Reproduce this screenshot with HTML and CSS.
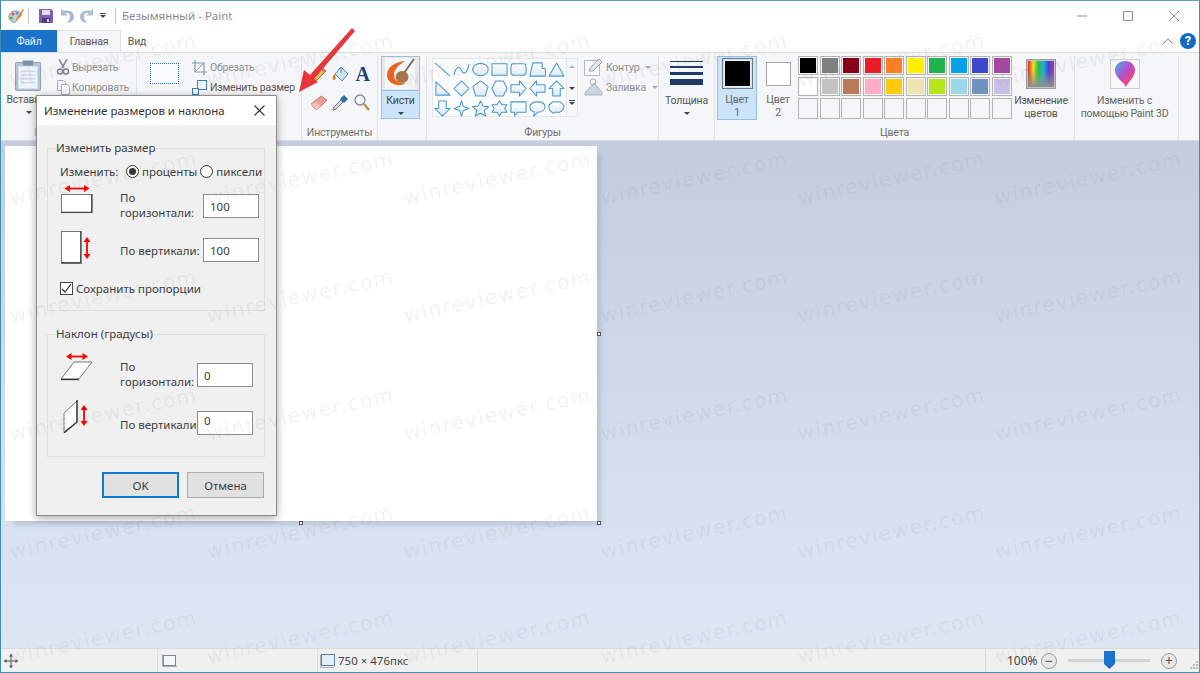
FILE: index.html
```html
<!DOCTYPE html>
<html lang="ru">
<head>
<meta charset="utf-8">
<title>Paint</title>
<link rel="stylesheet" href="styles.css">
</head>
<body>
<svg class="defs" width="0" height="0">
  <defs>
    <linearGradient id="shapeFill" x1="0" y1="0" x2="0" y2="1"><stop offset="0" stop-color="#fff"/><stop offset="1" stop-color="#dbeaf7"/></linearGradient>
    <linearGradient id="drop" x1="0" y1="0" x2="1" y2="1"><stop offset="0" stop-color="#3fb4f0"/><stop offset=".45" stop-color="#b04fd0"/><stop offset=".75" stop-color="#ef4a7a"/><stop offset="1" stop-color="#f7a72a"/></linearGradient>
  </defs>
</svg>
<div class="window">
  <header class="titlebar">
    <svg class="qa logo" width="18" height="18" viewBox="0 0 18 18"><path d="M2 11c-1-4 3-7 7-7 3 0 6 2 5 5-1 2-4 1-4 3s-1 4-4 3c-2-.5-3.500-2-4-4z" fill="#c9cfd8" stroke="#7d8fa8"/><circle cx="6" cy="7" r="1.600" fill="#e8503a"/><circle cx="10" cy="6.500" r="1.400" fill="#3ea0dd"/><circle cx="4.500" cy="11" r="1.500" fill="#57b04b"/><path d="M9 12l7-10 1 1-6 10z" fill="#e98a2b"/></svg>
    <span class="qa-sep first"></span>
    <svg class="qa save" width="14" height="14" viewBox="0 0 14 14"><path d="M0 0h12l2 2v12H0z" fill="#7d5fb0"/><path d="M3 1h8v5H3z" fill="#e4ddf0"/><path d="M3 9h8v5H3z" fill="#4c3c78"/><path d="M8 10h2v3H8z" fill="#d8d0ea"/></svg>
    <svg class="qa undo" width="14" height="15" viewBox="0 0 14 14"><path d="M1 0v7h7L5.500 4.800C8 4 10 5.500 10 8s-1 4-3 6c4 .5 7-2 7-6 0-5-6-7-10.500-5.500z" fill="#a9bdd2"/></svg>
    <svg class="qa redo" width="14" height="15" viewBox="0 0 14 14"><path d="M13 0v7H6l2.500-2.200C6 4 4 5.500 4 8s1 4 3 6c-4 .5-7-2-7-6 0-5 6-7 10.500-5.500z" fill="#b0bfd0"/></svg>
    <span class="qa-drop"><i class="bar"></i><i class="tri"></i></span>
    <span class="qa-sep second"></span>
    <span class="doc-title">Безымянный - Paint</span>
    <span class="win-btns">
      <svg class="win" width="46" height="12" viewBox="0 0 46 12"><path d="M18 6h10" stroke="#8a8a8a"/></svg>
      <svg class="win" width="46" height="12" viewBox="0 0 46 12"><path d="M18.500 1.500h9v9h-9z" fill="none" stroke="#8a8a8a"/></svg>
      <svg class="win" width="46" height="12" viewBox="0 0 46 12"><path d="M18 1l10 10M28 1L18 11" stroke="#8a8a8a"/></svg>
    </span>
  </header>

  <nav class="tabs">
    <span class="tab file">Файл</span>
    <span class="tab home">Главная</span>
    <span class="tab view">Вид</span>
    <span class="tabs-right">
      <svg width="10" height="6" viewBox="0 0 10 6"><path d="M.5 5.500L5 1l4.500 4.500" fill="none" stroke="#8f8f8f"/></svg>
      <span class="help">?</span>
    </span>
  </nav>

  <section class="ribbon">
    <div class="group g-clip">
      <div class="g-body clip-body">
        <div class="big paste">
          <svg width="27" height="33" viewBox="0 0 28 33"><rect x=".5" y="3" width="26" height="29" rx="1" fill="#b7c6d6" stroke="#8b9bb0"/><rect x="3.500" y="7" width="20" height="23" fill="#edf3f9"/><path d="M6 12h15M6 16h15M6 20h15M6 24h15" stroke="#b9cbe0"/><rect x="8" y="1" width="11" height="5" rx="1" fill="#7f8fa4"/></svg>
          <span class="lbl">Вставить</span><i class="tri"></i>
        </div>
        <div class="rows">
          <div class="row"><svg width="14" height="16" viewBox="0 0 14 16"><path d="M3 0l5 9M11 0L6 9" stroke="#8b8f96" stroke-width="1.600"/><circle cx="4" cy="12.500" r="2.500" fill="none" stroke="#7f8794" stroke-width="1.500"/><circle cx="10" cy="12.500" r="2.500" fill="none" stroke="#7f8794" stroke-width="1.500"/></svg><span>Вырезать</span></div>
          <div class="row"><svg width="14" height="15" viewBox="0 0 14 15"><path d="M1.500.5h6l2 2v8h-8z" fill="#eef1f5" stroke="#a7aeb8"/><path d="M5.500 4.500h6l2 2v8h-8z" fill="#f5f7fa" stroke="#a7aeb8"/></svg><span>Копировать</span></div>
        </div>
      </div>
      <div class="g-label">Буфер обмена</div>
    </div>

    <div class="group g-image">
      <div class="g-body image-body">
        <div class="select"></div>
        <div class="rows">
          <div class="row"><svg width="15" height="15" viewBox="0 0 15 15"><path d="M3 0v12h12M0 3h12v12" fill="none" stroke="#7f9ab5" stroke-width="1.200"/><path d="M3 12L12 3" stroke="#7f9ab5"/></svg><span>Обрезать</span></div>
          <div class="row dark"><svg width="15" height="15" viewBox="0 0 15 15"><rect x="5.500" y=".5" width="9" height="9" fill="#f0f6fc" stroke="#3d7fb8"/><rect x=".5" y="8.500" width="6" height="6" fill="#f0f6fc" stroke="#3d7fb8"/></svg><span>Изменить размер</span></div>
        </div>
      </div>
      <div class="g-label">Изображение</div>
    </div>

    <div class="group g-tools">
      <div class="g-body tools">
        <svg width="17" height="17" viewBox="0 0 17 17"><path d="M1 16l2-6L12 1l4 4-9 9z" fill="#e9c15a" stroke="#8a6a28"/><path d="M12 1l4 4-2 2-4-4z" fill="#d08070"/><path d="M1 16l1-4 3 3z" fill="#333"/></svg>
        <svg width="17" height="17" viewBox="0 0 17 17"><path d="M9 1l7 7-6 7-7-7z" fill="#cfe3f5" stroke="#5a84a8"/><path d="M9 1v6" stroke="#5a84a8"/><path d="M3 8c-3 2-3 6-1 6s2-3 1-6z" fill="#e8762a"/></svg>
        <span class="big-a">A</span>
        <svg width="18" height="15" viewBox="0 0 18 15"><path d="M1 9l10-8 6 4-9 9H5z" fill="#ef9c94" stroke="#c77a72"/><path d="M1 9l4 5h3l3-3-5-4z" fill="#f3c0ba"/></svg>
        <svg width="17" height="17" viewBox="0 0 17 17"><path d="M1 16l1-3 7-7 2 2-7 7z" fill="#d5dce4" stroke="#6a7684"/><path d="M8 5l4-4 4 4-4 4z" fill="#2f6da8"/></svg>
        <svg width="16" height="17" viewBox="0 0 16 17"><circle cx="6" cy="6" r="5" fill="#f2f7fc" stroke="#7f8b99" stroke-width="1.300"/><path d="M10 10l5 6" stroke="#b58d4c" stroke-width="2.400"/></svg>
      </div>
      <div class="g-label">Инструменты</div>
    </div>

    <div class="group g-brush">
      <div class="g-body">
        <div class="brush-btn">
          <div class="brush-icon">
            <svg width="30" height="31" viewBox="0 0 30 31"><rect width="30" height="31" fill="#f6f6f6"/><path d="M29 1L19 15" stroke="#6a6a6a" stroke-width="1.800"/><path d="M20 3C10 4 2 9 2 17c0 7 8 11 14 10 3-.5 5-2 5-2-6 1-12-2-12-8 0-6 5-10 11-14z" fill="#e8641e"/><ellipse cx="17" cy="19" rx="6.500" ry="6" fill="#a6754a"/></svg>
          </div>
          <span class="lbl">Кисти</span><i class="tri"></i>
        </div>
      </div>
      <div class="g-label"></div>
    </div>

    <div class="group g-shapes">
      <div class="g-body shapes-body">
        <div class="gallery">
          <svg viewBox="0 0 18 18"><path d="M1 2l16 14"/></svg>
          <svg viewBox="0 0 18 18"><path d="M1 15C3 5 7 5 9 10s6 4 8-7" fill="none"/></svg>
          <svg viewBox="0 0 18 18"><ellipse cx="9" cy="9" rx="8.200" ry="6.500"/></svg>
          <svg viewBox="0 0 18 18"><rect x="1" y="3" width="16" height="12"/></svg>
          <svg viewBox="0 0 18 18"><rect x="1" y="3" width="16" height="12" rx="3"/></svg>
          <svg viewBox="0 0 18 18"><path d="M1 16L4 2h10v6h3l1 8z"/></svg>
          <svg viewBox="0 0 18 18"><path d="M9 2l8 14H1z"/></svg>
          <svg viewBox="0 0 18 18"><path d="M2 2l15 14H2z"/></svg>
          <svg viewBox="0 0 18 18"><path d="M9 1l8 8-8 8-8-8z"/></svg>
          <svg viewBox="0 0 18 18"><path d="M9 1l8 6-3 10H4L1 7z"/></svg>
          <svg viewBox="0 0 18 18"><path d="M5 1h8l4 8-4 8H5L1 9z"/></svg>
          <svg viewBox="0 0 18 18"><path d="M1 5h9V1l7 8-7 8v-4H1z"/></svg>
          <svg viewBox="0 0 18 18"><path d="M17 5H8V1L1 9l7 8v-4h9z"/></svg>
          <svg viewBox="0 0 18 18"><path d="M5 17V9H1l8-8 8 8h-4v8z"/></svg>
          <svg viewBox="0 0 18 18"><path d="M5 1v8H1l8 8 8-8h-4V1z"/></svg>
          <svg viewBox="0 0 18 18"><path d="M9 1l2 6 6 2-6 2-2 6-2-6-6-2 6-2z"/></svg>
          <svg viewBox="0 0 18 18"><path d="M9 1l2.500 5.500 6 .5-4.500 4 1.500 6L9 14l-5.500 3L5 11 .5 7l6-.5z"/></svg>
          <svg viewBox="0 0 18 18"><path d="M9 1l2.500 4H17l-2.500 4 2.500 4h-5.500L9 17l-2.500-4H1l2.500-4L1 5h5.500z"/></svg>
          <svg viewBox="0 0 18 18"><path d="M1 2h16v11H8l-3 4v-4H1z"/></svg>
          <svg viewBox="0 0 18 18"><path d="M9 2c5 0 8 2 8 5.500S13 13 9 13l-4 4 .5-4.500C3 12 1 10 1 7.500 1 4 4 2 9 2z"/></svg>
          <svg viewBox="0 0 18 18"><path d="M4 3c1-2 3-1 5-1s3-1 5 1 3 2 3 4-1 3-2 4-3 3-5 2-3 1-4 1-3-2-4-3-1-3-1-4 1-3 3-4z"/></svg>
        </div>
        <div class="gal-scroll">
          <i class="up"></i><i class="tri"></i><span class="more"><i class="bar"></i><i class="tri"></i></span>
        </div>
        <div class="rows outline">
          <div class="row"><svg width="20" height="18" viewBox="0 0 20 18"><rect x=".5" y="2.500" width="15" height="15" fill="#fafafa" stroke="#b6bcc4"/><path d="M5 13l1-3 9-9 3 3-9 9z" fill="#e4e8ee" stroke="#97a1ae"/></svg><span>Контур</span><i class="tri light"></i></div>
          <div class="row"><svg width="20" height="18" viewBox="0 0 20 18"><path d="M1 15l9-10 8 9v3H1z" fill="#ccd6e0" stroke="#a8b5c4"/><circle cx="9" cy="4" r="3" fill="none" stroke="#a8b5c4"/></svg><span>Заливка</span><i class="tri light"></i></div>
        </div>
      </div>
      <div class="g-label">Фигуры</div>
    </div>

    <div class="group g-thick">
      <div class="g-body">
        <div class="big thick">
          <div class="lines"><i class="l1"></i><i class="l2"></i><i class="l3"></i><i class="l4"></i></div>
          <span class="lbl">Толщина</span><i class="tri"></i>
        </div>
      </div>
      <div class="g-label"></div>
    </div>

    <div class="group g-colors">
      <div class="g-body colors-body">
        <div class="color-btn active"><span class="swatch one"></span><span class="lbl">Цвет<br>1</span></div>
        <div class="color-btn"><span class="swatch two"></span><span class="lbl">Цвет<br>2</span></div>
        <div class="palette">
          <i class="c1"></i><i class="c2"></i><i class="c3"></i><i class="c4"></i><i class="c5"></i><i class="c6"></i><i class="c7"></i><i class="c8"></i><i class="c9"></i><i class="c10"></i>
          <i class="c11"></i><i class="c12"></i><i class="c13"></i><i class="c14"></i><i class="c15"></i><i class="c16"></i><i class="c17"></i><i class="c18"></i><i class="c19"></i><i class="c20"></i>
          <i></i><i></i><i></i><i></i><i></i><i></i><i></i><i></i><i></i><i></i>
        </div>
        <div class="big edit-colors"><span class="rainbow"></span><span class="lbl">Изменение<br>цветов</span></div>
      </div>
      <div class="g-label">Цвета</div>
    </div>

    <div class="group g-3d">
      <div class="g-body">
        <div class="big p3d">
          <span class="p3d-box"><svg width="20" height="26" viewBox="0 0 20 26"><path d="M10 0c6 0 10 4 10 9 0 7-6 11-9 17C9 21 0 17 0 9c0-5 4-9 10-9z" fill="url(#drop)"/></svg></span>
          <span class="lbl">Изменить с<br>помощью Paint 3D</span>
        </div>
      </div>
      <div class="g-label"></div>
    </div>
  </section>

  <main class="workspace">
    <div class="sheet">
      <i class="handle h-right"></i><i class="handle h-bottom"></i><i class="handle h-corner"></i>
    </div>
  </main>

  <footer class="status">
    <div class="s-cell s-pos"><svg width="14" height="14" viewBox="0 0 14 14"><path d="M7 0v14M0 7h14" stroke="#555"/><path d="M7 0L5 2.500h4zM7 14l-2-2.500h4zM0 7l2.500-2v4zM14 7l-2.500-2v4z" fill="#555"/></svg></div>
    <div class="s-cell s-sel"><svg width="15" height="13" viewBox="0 0 15 13"><rect x="1.500" y="1.500" width="12" height="10" fill="#f4f7fa" stroke="#7d8793"/><path d="M.5 0v12.500H15" fill="none" stroke="#a8b0ba"/></svg></div>
    <div class="s-cell s-size"><svg width="15" height="14" viewBox="0 0 15 14"><rect x="1.500" y=".5" width="13" height="11" fill="#e2eefa" stroke="#5f7f9e"/><path d="M.5 1v12.500H14" fill="none" stroke="#a8b0ba"/></svg><span>750 × 476пкс</span></div>
    <div class="s-cell s-fill"></div>
    <div class="s-cell s-zoom">
      <span class="z-val">100%</span>
      <span class="z-btn">−</span>
      <span class="z-track"><svg class="z-thumb" width="11" height="18" viewBox="0 0 11 18"><path d="M0 0h11v13l-5.500 5L0 13z" fill="#1b73d0"/></svg></span>
      <span class="z-btn">+</span>
      <svg class="grip" width="9" height="9" viewBox="0 0 9 9"><path d="M7 0h2v2H7zM4 3h2v2H4zM7 3h2v2H7zM1 6h2v2H1zM4 6h2v2H4zM7 6h2v2H7z" fill="#b9b9b9"/></svg>
    </div>
  </footer>

  <section class="dialog">
    <div class="d-title"><span>Изменение размеров и наклона</span>
      <svg width="11" height="11" viewBox="0 0 11 11"><path d="M.5.5l10 10M10.500.5l-10 10" stroke="#333" stroke-width="1.100"/></svg>
    </div>
    <div class="d-body">
      <fieldset class="box box-size">
        <legend>Изменить размер</legend>
        <div class="mode">
          <span class="mode-lbl">Изменить:</span>
          <span class="radio on"></span><span class="r-text">проценты</span>
          <span class="radio"></span><span>пиксели</span>
        </div>
        <div class="field f-h">
          <span class="f-icon"><svg width="34" height="29" viewBox="0 0 34 29"><path d="M8 4.500h18" stroke="#f00" stroke-width="1.800"/><path d="M4.500 4.500L10 1v7zM29.500 4.500L24 1v7z" fill="#f00"/><rect x="1.500" y="10.500" width="30" height="18" fill="#fff" stroke="#777"/><path d="M1 28.500h31V10" fill="none" stroke="#444" stroke-width="1.300"/></svg></span>
          <span class="f-label">По<br>горизонтали:</span>
          <span class="input">100</span>
        </div>
        <div class="field f-v">
          <span class="f-icon"><svg width="34" height="33" viewBox="0 0 34 33"><rect x="1.500" y=".5" width="19" height="31" fill="#fff" stroke="#777"/><path d="M1 32h20V0" fill="none" stroke="#444" stroke-width="1.300"/><path d="M27 9v15" stroke="#f00" stroke-width="1.800"/><path d="M27 6l-3.500 5h7zM27 28l-3.500-5h7z" fill="#f00"/></svg></span>
          <span class="f-label">По вертикали:</span>
          <span class="input">100</span>
        </div>
        <div class="check-row"><span class="check"><svg width="11" height="11" viewBox="0 0 11 11"><path d="M1 6l3 3 6-8" fill="none" stroke="#333" stroke-width="1.200"/></svg></span><span>Сохранить пропорции</span></div>
      </fieldset>
      <fieldset class="box box-skew">
        <legend>Наклон (градусы)</legend>
        <div class="field f-sh">
          <span class="f-icon"><svg width="34" height="29" viewBox="0 0 34 29"><path d="M9 4.500h16" stroke="#f00" stroke-width="1.800"/><path d="M6 4.500L11.500 1v7zM28 4.500L22.500 1v7z" fill="#f00"/><path d="M1 27l13-17h18L19 27z" fill="#fff" stroke="#777"/><path d="M1 27.500h18" stroke="#333" stroke-width="1.300"/></svg></span>
          <span class="f-label">По<br>горизонтали:</span>
          <span class="input">0</span>
        </div>
        <div class="field f-sv">
          <span class="f-icon"><svg width="34" height="33" viewBox="0 0 34 33"><path d="M4 13L17 1v21L4 32z" fill="#fff" stroke="#777"/><path d="M17 0v22L4 33" fill="none" stroke="#333" stroke-width="1.300"/><path d="M24 8v14" stroke="#f00" stroke-width="1.800"/><path d="M24 5l-3.500 5h7zM24 26l-3.500-5h7z" fill="#f00"/></svg></span>
          <span class="f-label">По вертикали:</span>
          <span class="input">0</span>
        </div>
      </fieldset>
      <div class="d-buttons"><span class="btn ok">OK</span><span class="btn">Отмена</span></div>
    </div>
  </section>

  <svg class="arrow" width="70" height="76" viewBox="0 0 70 76"><path d="M2 71L7 49l6 5L55 7l3 3-41 48 4 3z" fill="#e8353b"/></svg>

  <div class="watermark">
    <span>winreviewer.com</span><span>winreviewer.com</span><span>winreviewer.com</span><span>winreviewer.com</span><span>winreviewer.com</span><span>winreviewer.com</span>
    <span>winreviewer.com</span><span>winreviewer.com</span><span>winreviewer.com</span><span>winreviewer.com</span><span>winreviewer.com</span><span>winreviewer.com</span>
    <span>winreviewer.com</span><span>winreviewer.com</span><span>winreviewer.com</span><span>winreviewer.com</span><span>winreviewer.com</span><span>winreviewer.com</span>
    <span>winreviewer.com</span><span>winreviewer.com</span><span>winreviewer.com</span><span>winreviewer.com</span><span>winreviewer.com</span><span>winreviewer.com</span>
    <span>winreviewer.com</span><span>winreviewer.com</span><span>winreviewer.com</span><span>winreviewer.com</span><span>winreviewer.com</span><span>winreviewer.com</span>
    <span>winreviewer.com</span><span>winreviewer.com</span><span>winreviewer.com</span><span>winreviewer.com</span><span>winreviewer.com</span><span>winreviewer.com</span>
  </div>
</div>
</body>
</html>
```

FILE: styles.css
```css
* { box-sizing: border-box; }
html, body { margin: 0; padding: 0; }
body { width: 1200px; height: 673px; overflow: hidden; background: #fff; font-family: "Roboto", "Noto Sans", sans-serif; font-size: 10.500px; letter-spacing: -.2px; color: #555; }
.defs { position: absolute; }
i { display: block; font-style: normal; }
svg { display: block; flex: none; }

.window { position: relative; width: 1200px; height: 673px; display: flex; flex-direction: column; border: 1px solid #3c8fb0; border-top-color: #5aa3bf; overflow: hidden; filter: blur(.3px); }

/* title bar */
.titlebar { height: 29px; display: flex; align-items: center; background: #fff; flex: none; }
.logo { margin-left: 6px; }
.qa-sep { width: 1px; height: 16px; background: #c9c9c9; }
.qa-sep.first { margin-left: 3px; }
.save { margin-left: 10px; }
.undo { margin-left: 7px; }
.redo { margin-left: 6px; }
.qa-drop { margin-left: 6px; display: flex; flex-direction: column; align-items: center; gap: 1px; }
.qa-drop .bar, .more .bar { width: 6px; height: 1px; background: #444; }
.tri { width: 0; height: 0; border-left: 3px solid transparent; border-right: 3px solid transparent; border-top: 3px solid #444; }
.tri.light { border-top-color: #aaa; margin-left: 4px; }
.qa-sep.second { margin-left: 9px; }
.doc-title { margin-left: 6px; font-family: "Noto Sans", sans-serif; font-size: 11.500px; letter-spacing: 0; color: #8b8b8b; }
.win-btns { margin-left: auto; display: flex; margin-right: 2px; }

/* tabs */
.tabs { height: 22px; flex: none; display: flex; background: #fff; position: relative; }
.tab { display: flex; align-items: center; justify-content: center; }
.tab.file { width: 56px; background: #1a73c8; color: #e8f2fb; }
.tab.home { width: 64px; background: #f5f6f7; border: 1px solid #dcdfe2; border-bottom: 0; color: #555; }
.tab.view { width: 32px; color: #555; }
.tabs-right { margin-left: auto; margin-right: 3px; display: flex; align-items: center; gap: 7px; }
.help { width: 16px; height: 16px; border-radius: 50%; background: #0f6cc0; color: #fff; font-size: 12px; font-weight: 700; display: flex; align-items: center; justify-content: center; }

/* ribbon */
.ribbon { height: 89px; flex: none; display: flex; background: #f5f6f7; border-top: 1px solid #dcdfe2; border-bottom: 1px solid #dadbdc; padding-top: 3px; }
.group { display: flex; flex-direction: column; border-right: 1px solid #e2e3e5; }
.g-body { flex: 1; display: flex; min-height: 0; }
.g-label { height: 14px; text-align: center; color: #6e6e6e; line-height: 14px; }
.g-clip { width: 136px; }
.g-image { width: 165px; }
.g-tools { width: 76px; }
.g-brush { width: 49px; }
.g-shapes { width: 232px; }
.g-thick { width: 56px; }
.g-colors { width: 360px; }
.g-3d { width: 104px; }
.lbl { display: block; line-height: 13px; text-align: center; }
.big { display: flex; flex-direction: column; align-items: center; }
.big .tri { margin-top: 5px; }
.rows { display: flex; flex-direction: column; }
.row { display: flex; align-items: center; gap: 2px; height: 20px; color: #8f8f8f; white-space: nowrap; }
.row.dark { color: #555; }

.paste { width: 55px; flex: none; padding-top: 3px; }
.paste .lbl { margin-top: 1px; }
.clip-body .rows { padding-top: 1px; }

.select { width: 29px; height: 21px; flex: none; margin: 7px 0 0 13px; border: 1px dotted #2f6da8; background: #fbfcfd; }
.image-body .rows { margin-left: 13px; padding-top: 1px; }
.image-body .row { gap: 3px; }

.tools { display: grid; grid-template-columns: repeat(3, 17px); grid-auto-rows: 28px; column-gap: 5px; padding: 4px 0 0 8px; align-items: center; align-content: start; }
.big-a { font-family: "Liberation Serif", serif; font-weight: 700; font-size: 20px; line-height: 17px; color: #1f3f78; text-align: center; }

.brush-btn { width: 39px; height: 63px; margin-left: 3px; border: 1px solid #92c0e8; background: #cce4f7; display: flex; flex-direction: column; align-items: center; }
.brush-icon { width: 100%; height: 34px; padding: 1px 3px; background: #e8e8e8; border-bottom: 1px solid #92c0e8; }
.brush-btn .lbl { margin-top: 3px; color: #444; }
.brush-btn .tri { margin-top: 5px; }

.shapes-body { padding: 2px 0 0 5px; }
.gallery { width: 135px; height: 59px; border: 1px solid #e3e6ea; background: #fbfcfe; display: grid; grid-template-columns: repeat(7, 19px); grid-auto-rows: 19.300px; padding: 1px 0 0 0; justify-items: center; align-items: center; }
.gallery svg { width: 17px; height: 17px; fill: url(#shapeFill); stroke: #4e95cb; stroke-width: 1.100; stroke-linejoin: round; }
.gal-scroll { width: 13px; height: 59px; border: 1px solid #e3e6ea; border-left: 0; display: flex; flex-direction: column; align-items: center; padding-top: 6px; }
.gal-scroll .up { width: 0; height: 0; border-left: 3px solid transparent; border-right: 3px solid transparent; border-bottom: 3px solid #b6b6b6; margin-bottom: 19px; }
.gal-scroll .tri { margin-bottom: 10px; }
.more { display: flex; flex-direction: column; align-items: center; gap: 1px; }
.outline { margin-left: 6px; margin-top: -1px; }
.outline .row { gap: 2px; }

.thick { width: 100%; }
.lines { width: 33px; margin: 5px 0 9px; display: flex; flex-direction: column; gap: 4px; }
.lines i { background: #1f3a66; }
.l1 { height: 1px; } .l2 { height: 2px; } .l3 { height: 3px; } .l4 { height: 6px; }

.colors-body { padding-left: 2px; }
.color-btn { width: 40px; height: 64px; display: flex; flex-direction: column; align-items: center; border: 1px solid transparent; color: #666; }
.color-btn.active { background: #cce4f7; border-color: #92c0e8; }
.color-btn + .color-btn { width: 38px; margin-left: 2px; }
.swatch { display: block; }
.swatch.one { width: 31px; height: 32px; margin-top: 1px; background: #000; border: 2px solid #cce4f7; outline: 1px solid #777; outline-offset: -1px; box-shadow: inset 0 0 0 1px #eef; }
.swatch.two { width: 25px; height: 25px; margin-top: 5px; background: #fff; border: 1px solid #a8a8a8; }
.color-btn .lbl { margin-top: 4px; }
.color-btn + .color-btn .lbl { margin-top: 7px; }
.palette { width: 214px; height: 63px; margin-left: 1px; display: grid; grid-template-columns: repeat(10, 20px); grid-template-rows: 19px 19px 21px; gap: 2px 1.500px; }
.palette i { border: 1px solid #b4b4b4; box-shadow: inset 0 0 0 1px #f5f5f5; background: #f5f6f7; }
.c1 { background: #000 !important; } .c2 { background: #7f7f7f !important; } .c3 { background: #880015 !important; } .c4 { background: #ed1c24 !important; } .c5 { background: #ff7f27 !important; } .c6 { background: #fff200 !important; } .c7 { background: #22b14c !important; } .c8 { background: #00a2e8 !important; } .c9 { background: #3f48cc !important; } .c10 { background: #a349a4 !important; }
.c11 { background: #fff !important; } .c12 { background: #c3c3c3 !important; } .c13 { background: #b97a57 !important; } .c14 { background: #ffaec9 !important; } .c15 { background: #ffc90e !important; } .c16 { background: #efe4b0 !important; } .c17 { background: #b5e61d !important; } .c18 { background: #99d9ea !important; } .c19 { background: #7092be !important; } .c20 { background: #c8bfe7 !important; }
.edit-colors { width: 58px; }
.rainbow { display: block; width: 30px; height: 30px; margin: 3px 0 5px; border: 2px solid #c4c4c4; outline: 1px solid #9a9a9a; outline-offset: -1px; background: linear-gradient(to bottom, rgba(255,255,255,0) 35%, #8f8f8f 100%), linear-gradient(to right, #e6202a, #f0e020, #20c040, #20b0e0, #4040d0, #c030b0); }

.p3d { width: 100%; padding: 3px 4px 0 0; }
.p3d-box { width: 30px; height: 30px; background: #f8f8f8; border: 1px solid #cfcfcf; display: flex; align-items: center; justify-content: center; margin-bottom: 5px; }
.p3d .lbl { white-space: nowrap; color: #666; }

/* workspace */
.workspace { flex: 1; background: linear-gradient(to bottom, #c4cde0, #dde7f4); padding: 5px 0 0 4px; min-height: 0; }
.sheet { position: relative; width: 592px; height: 375px; background: #fff; box-shadow: 6px 6px 4px -2px rgba(125,145,180,.3); }
.handle { position: absolute; width: 4px; height: 4px; background: #fff; border: 1px solid #555; }
.h-right { right: -4px; top: 186px; }
.h-bottom { bottom: -4px; left: 294px; }
.h-corner { right: -4px; bottom: -4px; }

/* status bar */
.status { height: 24px; flex: none; display: flex; background: #f0f0f0; border-top: 1px solid #dadada; color: #444; font-family: "Noto Sans", sans-serif; letter-spacing: 0; }
.s-cell { display: flex; align-items: center; border-right: 1px solid #dcdcdc; }
.s-pos { width: 157px; padding-left: 3px; }
.s-sel { width: 160px; padding-left: 4px; }
.s-size { width: 160px; padding-left: 2px; gap: 3px; font-size: 11.500px; }
.s-fill { width: 508px; }
.s-zoom { flex: 1; border-right: 0; padding-left: 21px; font-size: 12px; }
.z-val { width: 34px; }
.z-btn { width: 16px; height: 16px; border-radius: 50%; border: 1px solid #9a9a9a; background: #e7e7e7; display: flex; align-items: center; justify-content: center; font-size: 14px; line-height: 14px; color: #555; }
.z-track { position: relative; width: 82px; height: 3px; margin: 0 11px; background: #d2d2d2; }
.z-thumb { position: absolute; left: 36px; top: -8px; }
.grip { margin-left: 12px; align-self: flex-end; margin-bottom: 2px; }

/* dialog */
.dialog { position: absolute; left: 35px; top: 94px; width: 241px; height: 421px; border: 1px solid #8c8c8c; background: #f0f0f0; box-shadow: 0 2px 8px rgba(0,0,0,.35); color: #3c3c3c; font-family: "Noto Sans", sans-serif; font-size: 11.500px; letter-spacing: 0; display: flex; flex-direction: column; }
.d-title { height: 29px; flex: none; background: #fff; display: flex; align-items: center; justify-content: space-between; padding: 0 11px 0 7px; color: #333; }
.d-body { flex: 1; padding: 16px 11px 0 10px; display: flex; flex-direction: column; }
.box { margin: 0; padding: 0 0 0 12px; border: 1px solid #dfdfdf; min-width: 0; }
.box legend { padding: 0 1px; margin-left: -5px; line-height: 14px; }
.box-size { height: 170px; }
.box-skew { height: 130px; margin-top: 16px; }
.mode { display: flex; align-items: center; height: 18px; margin-top: 7px; white-space: nowrap; }
.mode-lbl { width: 66px; }
.radio { width: 13px; height: 13px; flex: none; border: 1px solid #333; border-radius: 50%; background: #fff; margin-right: 3px; position: relative; }
.radio.on::after { content: ""; position: absolute; inset: 2px; border-radius: 50%; background: #333; }
.r-text { margin-right: 3px; }
.field { display: grid; grid-template-columns: 60px 83px 56px; align-items: center; white-space: nowrap; }
.f-icon { align-self: start; }
.f-label { line-height: 15px; }
.f-h .f-label { margin-top: -3px; }
.input { display: flex; align-items: center; height: 24px; padding-left: 6px; background: #fff; border: 1px solid #8c8c8c; }
.f-h { margin-top: 4px; height: 44px; }
.f-v { margin-top: 3px; height: 38px; }
.check-row { display: flex; align-items: center; gap: 3px; margin-top: 12px; }
.check { width: 13px; height: 13px; border: 1px solid #444; background: #fff; display: flex; align-items: center; justify-content: center; }
.box-skew .field { grid-template-columns: 60px 77px 56px; }
.f-sh { margin-top: 11px; height: 46px; }
.f-sh .f-label { margin-top: -3px; }
.f-sv { margin-top: 2px; height: 45px; }
.f-sv .input { padding-bottom: 4px; }
.f-sv .f-label { margin-top: 4px; }
.d-buttons { display: flex; justify-content: flex-end; gap: 8px; margin: 15px 1px 0 0; }
.btn { width: 77px; height: 26px; background: #e1e1e1; border: 1px solid #adadad; display: flex; align-items: center; justify-content: center; }
.btn.ok { border: 2px solid #0f7ad0; }

/* annotation and watermark */
.arrow { position: absolute; left: 296px; top: 20px; }
.watermark { position: absolute; inset: 0; padding-left: 4px; display: grid; grid-template-columns: repeat(auto-fill, 197px); grid-template-rows: repeat(5, 118px) 81px; pointer-events: none; overflow: hidden; }
.watermark span { align-self: center; justify-self: center; font-family: "DejaVu Sans", sans-serif; font-size: 20px; line-height: 20px; letter-spacing: 1.500px; white-space: nowrap; color: rgba(110,110,110,.09); transform: rotate(-12deg); }
.watermark span:nth-child(n+31) { transform: translateY(5px) rotate(-12deg); }
```
